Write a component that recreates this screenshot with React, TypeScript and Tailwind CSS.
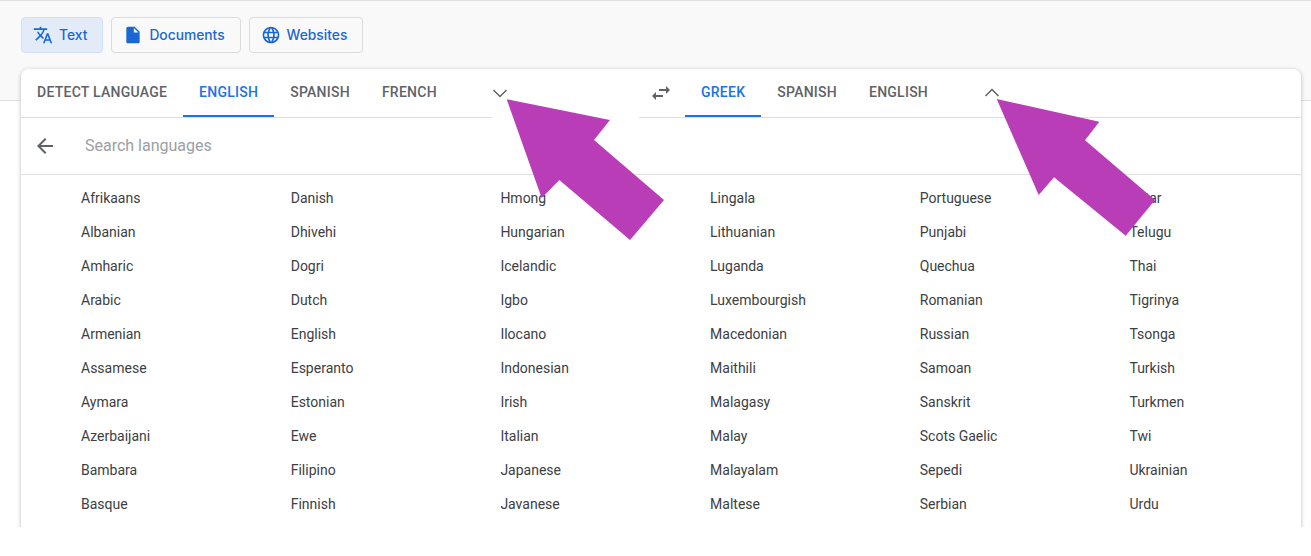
const TRANSLATE =
  "M12.87 15.07l-2.54-2.51.03-.03c1.74-1.94 2.98-4.17 3.71-6.53H17V4h-7V2H8v2H1v1.99h11.17C11.5 7.92 10.44 9.75 9 11.35 8.07 10.32 7.3 9.19 6.69 8h-2c.73 1.63 1.73 3.17 2.98 4.56l-5.09 5.02L4 19l5-5 3.11 3.11.76-2.04zM18.5 10h-2L12 22h2l1.12-3h4.75L21 22h2l-4.5-12zm-2.62 7l1.62-4.33L19.12 17h-3.24z";
const DOCUMENT =
  "M14 2H6c-1.1 0-1.99.9-1.99 2L4 20c0 1.1.89 2 1.99 2H18c1.1 0 2-.9 2-2V8l-6-6zm-1 7V3.5L18.5 9H13z";
const GLOBE =
  "M11.99 2C6.47 2 2 6.48 2 12s4.47 10 9.99 10C17.52 22 22 17.52 22 12S17.52 2 11.99 2zm6.93 6h-2.95c-.32-1.25-.78-2.45-1.38-3.56 1.84.63 3.37 1.91 4.33 3.56zM12 4.04c.83 1.2 1.48 2.53 1.91 3.96h-3.82c.43-1.43 1.08-2.76 1.91-3.96zM4.26 14C4.1 13.36 4 12.69 4 12s.1-1.36.26-2h3.38c-.08.66-.14 1.32-.14 2 0 .68.06 1.34.14 2H4.26zm.82 2h2.95c.32 1.25.78 2.45 1.38 3.56-1.84-.63-3.37-1.9-4.33-3.56zm2.95-8H5.08c.96-1.66 2.49-2.93 4.33-3.56C8.81 5.55 8.35 6.75 8.03 8zM12 19.96c-.83-1.2-1.48-2.53-1.91-3.96h3.82c-.43 1.43-1.08 2.76-1.91 3.96zM14.34 14H9.66c-.09-.66-.16-1.32-.16-2 0-.68.07-1.35.16-2h4.68c.09.65.16 1.32.16 2 0 .68-.07 1.34-.16 2zm.25 5.56c.6-1.11 1.06-2.31 1.38-3.56h2.95c-.96 1.65-2.49 2.93-4.33 3.56zM16.36 14c.08-.66.14-1.32.14-2 0-.68-.06-1.34-.14-2h3.38c.16.64.26 1.31.26 2s-.1 1.36-.26 2h-3.38z";
const SWAP = "M6.99 11L3 15l3.99 4v-3H14v-2H6.99v-3zM21 9l-3.99-4v3H10v2h7.01v3L21 9z";
const BACK = "M20 11H7.83l5.59-5.59L12 4l-8 8 8 8 1.41-1.41L7.83 13H20v-2z";

const COLUMNS = [
  ["Afrikaans", "Albanian", "Amharic", "Arabic", "Armenian", "Assamese", "Aymara", "Azerbaijani", "Bambara", "Basque"],
  ["Danish", "Dhivehi", "Dogri", "Dutch", "English", "Esperanto", "Estonian", "Ewe", "Filipino", "Finnish"],
  ["Hmong", "Hungarian", "Icelandic", "Igbo", "Ilocano", "Indonesian", "Irish", "Italian", "Japanese", "Javanese"],
  ["Lingala", "Lithuanian", "Luganda", "Luxembourgish", "Macedonian", "Maithili", "Malagasy", "Malay", "Malayalam", "Maltese"],
  ["Portuguese", "Punjabi", "Quechua", "Romanian", "Russian", "Samoan", "Sanskrit", "Scots Gaelic", "Sepedi", "Serbian"],
  ["Tatar", "Telugu", "Thai", "Tigrinya", "Tsonga", "Turkish", "Turkmen", "Twi", "Ukrainian", "Urdu"],
];

const Icon = ({ d, className }: { d: string; className: string }) => (
  <svg viewBox="0 0 24 24" fill="currentColor" className={className}>
    <path d={d} />
  </svg>
);

const ModeButton = ({ icon, label, active }: { icon: string; label: string; active?: boolean }) => (
  <button
    className={`flex h-9 items-center gap-1.5 rounded border pl-[11px] pr-[15px] font-['Inter',sans-serif] text-[13.8px] font-medium text-[#1967d2] ${
      active ? "border-[#d2e0f5] bg-[#e3ebf9]" : "border-[#dadce0] bg-[#f9f9f9]"
    }`}
  >
    <Icon d={icon} className="h-5 w-5 shrink-0" />
    {label}
  </button>
);

const Tab = ({ label, active }: { label: string; active?: boolean }) => (
  <div
    className={`flex h-12 items-center border-b-2 px-4 text-sm font-medium tracking-[0.25px] ${
      active ? "border-[#1a73e8] text-[#1a73e8]" : "border-transparent text-[#5f6368]"
    }`}
  >
    {label}
  </div>
);

export default function App() {
  return (
    <div className="relative h-[556px] w-[1311px] overflow-hidden bg-white font-['Roboto',sans-serif]">
      <div className="h-[527px] overflow-hidden">
        <div className="h-[101px] border-y border-[#e0e0e0] bg-[#f9f9f9] pl-[21px] pt-4">
          <div className="flex gap-2">
            <ModeButton icon={TRANSLATE} label="Text" active />
            <ModeButton icon={DOCUMENT} label="Documents" />
            <ModeButton icon={GLOBE} label="Websites" />
          </div>
        </div>

        <div className="relative ml-[21px] mr-[10px] mt-[-32px] h-[480px] rounded-t-lg bg-white shadow-[0_1px_4px_0_rgba(60,64,67,0.35)]">
          <div className="flex h-[49px]">
            <div className="flex h-[49px] w-[471px] border-b border-[#e0e0e0]">
              <Tab label="DETECT LANGUAGE" />
              <Tab label="ENGLISH" active />
              <Tab label="SPANISH" />
              <Tab label="FRENCH" />
            </div>
            <div className="flex h-12 w-[147px] items-center text-[#5f6368]">
              <svg viewBox="0 0 16 10" fill="none" stroke="currentColor" strokeWidth="1.5" className="h-[10px] w-4">
                <path d="M1.5 2l6.5 6.5L14.5 2" />
              </svg>
            </div>
            <div className="flex h-[49px] flex-1 border-b border-[#e0e0e0]">
              <div className="flex w-[46px] items-center justify-center pb-[1px] pr-[2px] text-[#5f6368]">
                <Icon d={SWAP} className="h-6 w-6" />
              </div>
              <Tab label="GREEK" active />
              <Tab label="SPANISH" />
              <Tab label="ENGLISH" />
              <div className="ml-10 flex h-12 items-center text-[#5f6368]">
                <svg viewBox="0 0 16 10" fill="none" stroke="currentColor" strokeWidth="1.5" className="h-[10px] w-4">
                  <path d="M1.5 8L8 1.5 14.5 8" />
                </svg>
              </div>
            </div>
          </div>

          <div className="flex h-[57px] items-center border-b border-[#e0e0e0] pl-3">
            <Icon d={BACK} className="h-6 w-6 text-[#5f6368]" />
            <span className="ml-7 text-base text-[#9aa0a6]">Search languages</span>
          </div>

          <div className="grid grid-cols-[repeat(6,209.7px)] pl-[60px] pt-1.5 text-sm text-[#3c4043]">
            {COLUMNS.map((col) => (
              <div key={col[0]} className="flex flex-col">
                {col.map((name) => (
                  <div key={name} className="flex h-[34px] items-center">
                    {name}
                  </div>
                ))}
              </div>
            ))}
          </div>
        </div>
      </div>

      <svg viewBox="0 0 1311 556" className="pointer-events-none absolute inset-0 h-[556px] w-[1311px]">
        <polygon fill="#b83db7" points="506.7,99.3 610,120 594,140 664,200 630,240 559.3,180 541.7,198" />
        <polygon fill="#b83db7" points="996.7,99 1099.3,121.7 1085,140.3 1155,200 1125.7,235.7 1054,177.3 1038.7,195" />
      </svg>
    </div>
  );
}
